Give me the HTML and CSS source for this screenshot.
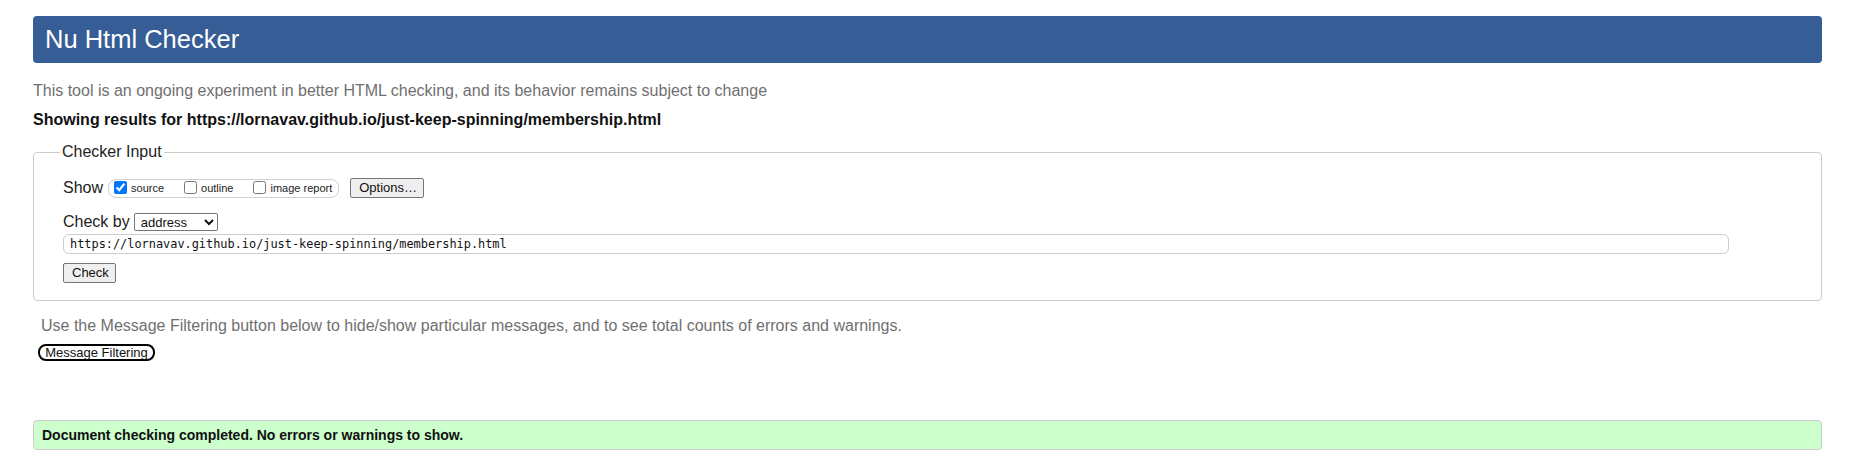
FILE: index.html
```html
<!DOCTYPE html>
<html lang="en">
<head>
<meta charset="utf-8">
<title>Nu Html Checker</title>
<link rel="stylesheet" href="styles.css">
</head>
<body>
<h1 class="title">Nu Html Checker</h1>
<p class="intro">This tool is an ongoing experiment in better HTML checking, and its behavior remains subject to change</p>
<p class="results">Showing results for https://lornavav.github.io/just-keep-spinning/membership.html</p>
<form class="checker-form">
  <fieldset class="checker">
    <legend class="checker-legend">Checker Input</legend>
    <div class="row show-row">
      <span class="label">Show</span>
      <span class="show-group">
        <label class="opt opt-source"><input type="checkbox" class="cb" checked><span>source</span></label>
        <label class="opt"><input type="checkbox" class="cb"><span>outline</span></label>
        <label class="opt"><input type="checkbox" class="cb"><span>image report</span></label>
      </span>
      <button type="button" class="btn options-btn">Options…</button>
    </div>
    <div class="row checkby-row">
      <span class="label">Check by</span>
      <select class="checkby-select"><option>address</option></select>
    </div>
    <div class="row url-row">
      <input class="url" type="text" value="https://lornavav.github.io/just-keep-spinning/membership.html">
    </div>
    <div class="row submit-row">
      <button type="button" class="btn check-btn">Check</button>
    </div>
  </fieldset>
</form>
<p class="filter-note">Use the Message Filtering button below to hide/show particular messages, and to see total counts of errors and warnings.</p>
<button type="button" class="filter-btn">Message Filtering</button>
<div class="success">Document checking completed. No errors or warnings to show.</div>
</body>
</html>
```

FILE: styles.css
```css
html, body {
  margin: 0;
  background: #ffffff;
}
body {
  padding: 16px 42px 0 33px;
  font-family: "Liberation Sans", Arial, sans-serif;
  color: #222222;
}
.title {
  margin: 0;
  height: 47px;
  padding-left: 12px;
  background: #365d95;
  color: #ffffff;
  border-radius: 4px;
  font-size: 25.5px;
  font-weight: normal;
  line-height: 47px;
}
.intro {
  margin: 18px 0 0 0;
  font-size: 16px;
  line-height: 20px;
  color: #707070;
}
.results {
  margin: 9px 0 0 0;
  font-size: 16px;
  line-height: 20px;
  font-weight: bold;
  color: #111111;
}
.checker-form {
  margin: 13px 0 0 0;
}
.checker {
  margin: 0;
  padding: 0 0 17px 29px;
  border: 1px solid #cccccc;
  border-radius: 4px;
  min-width: 0;
}
.checker-legend {
  margin-left: -3px;
  padding: 0 2px;
  font-size: 16px;
  line-height: 18px;
  color: #222222;
}
.row {
  display: flex;
  align-items: center;
}
.label {
  font-size: 16px;
  line-height: 20px;
  color: #222222;
}
.show-row {
  margin-top: 17px;
  height: 20px;
}
.show-group {
  display: flex;
  align-items: center;
  margin-left: 5px;
  height: 17px;
  padding: 0 6px 0 5px;
  border: 1px solid #d0d0d0;
  border-radius: 8px;
}
.opt {
  display: flex;
  align-items: center;
  font-size: 11px;
  line-height: 13px;
  color: #222222;
  margin-left: 20px;
}
.opt-source {
  margin-left: 0;
}
.cb {
  margin: 0 4px 0 0;
  width: 13px;
  height: 13px;
  position: relative;
  top: -1px;
}
.btn {
  height: 20px;
  padding: 0 8px;
  font-family: "Liberation Sans", Arial, sans-serif;
  font-size: 13px;
  line-height: 18px;
  color: #111111;
  background: #efefef;
  border: 1px solid #767676;
  border-radius: 2px;
}
.options-btn {
  margin-left: 11px;
  width: 74px;
}
.checkby-row {
  margin-top: 15px;
  height: 18px;
}
.checkby-select {
  margin-left: 4px;
  width: 84px;
  height: 18px;
  font-family: "Liberation Sans", Arial, sans-serif;
  font-size: 13px;
  color: #111111;
  border: 1px solid #767676;
  border-radius: 2px;
  background: #ffffff;
  padding: 0 0 0 2px;
}
.url-row {
  margin-top: 3px;
}
.url {
  box-sizing: border-box;
  width: 1666px;
  height: 20px;
  padding: 0 0 0 6px;
  border: 1px solid #cccccc;
  border-radius: 6px;
  font-family: "DejaVu Sans Mono", "Liberation Mono", monospace;
  font-size: 11.9px;
  color: #111111;
  outline: none;
}
.submit-row {
  margin-top: 9px;
}
.check-btn {
  width: 53px;
}
.filter-note {
  margin: 15px 0 0 8px;
  font-size: 16px;
  line-height: 20px;
  color: #707070;
}
.filter-btn {
  display: block;
  margin: 8px 0 0 5px;
  width: 117px;
  height: 17px;
  padding: 0;
  font-family: "Liberation Sans", Arial, sans-serif;
  font-size: 13px;
  line-height: 13px;
  color: #111111;
  background: #ffffff;
  border: 2px solid #000000;
  border-radius: 8px;
}
.success {
  margin-top: 59px;
  height: 28px;
  padding-left: 8px;
  background: #ccffcc;
  border: 1px solid #cccccc;
  border-radius: 4px;
  font-size: 14px;
  font-weight: bold;
  line-height: 28px;
  color: #111111;
}
```
